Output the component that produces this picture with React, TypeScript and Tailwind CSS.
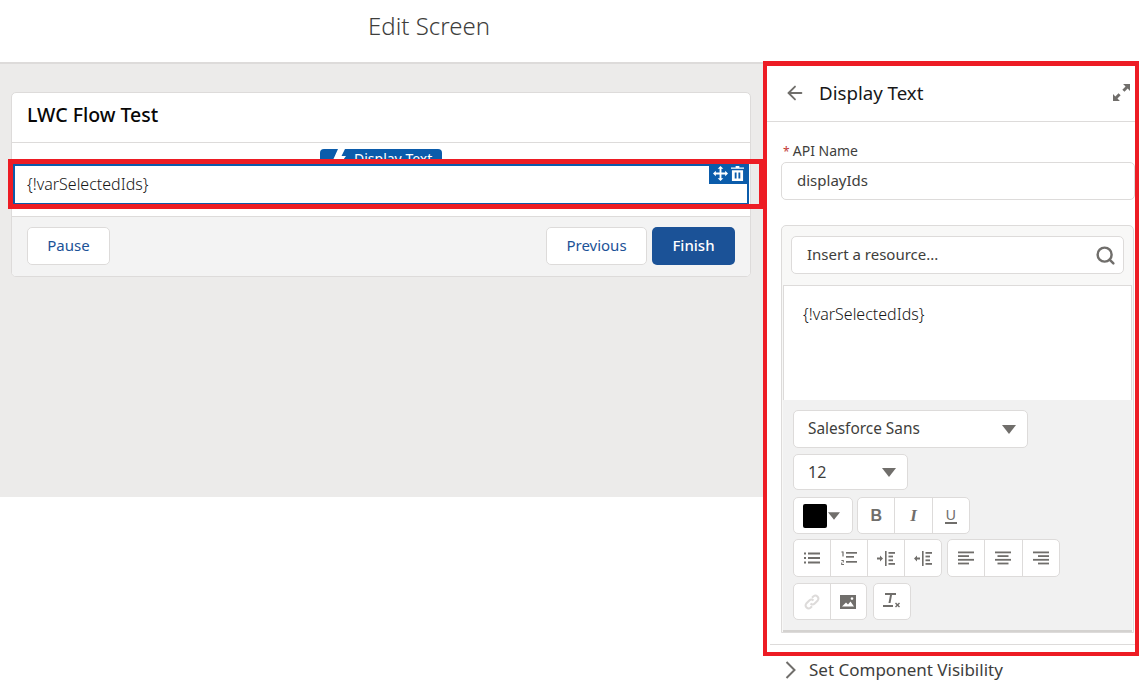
import { ArrowLeft, Search } from 'lucide-react';
import type { ReactNode } from 'react';

const ICON = '#706e6b';

function Caret({ className }: { className: string }) {
  return (
    <svg viewBox="0 0 14 9" className={className}>
      <path d="M0 0h14L7 9z" fill={ICON} />
    </svg>
  );
}

function Lines({ rows }: { rows: [number, number][] }) {
  return (
    <svg viewBox="0 0 16 14" className="w-[16px] h-[14px]">
      {rows.map(([x1, x2], i) => (
        <rect key={i} x={x1} y={i * 3.7 + 0.5} width={x2 - x1} height="1.8" fill={ICON} />
      ))}
    </svg>
  );
}

const full: [number, number] = [0, 16];

const Bullets = () => (
  <svg viewBox="0 0 16 12" className="w-[16px] h-[12px]" fill={ICON}>
    <rect x="0" y="0.5" width="2" height="2" /><rect x="4" y="0.5" width="12" height="2" />
    <rect x="0" y="5" width="2" height="2" /><rect x="4" y="5" width="12" height="2" />
    <rect x="0" y="9.5" width="2" height="2" /><rect x="4" y="9.5" width="12" height="2" />
  </svg>
);

const Numbered = () => (
  <svg viewBox="0 0 16 15" className="w-[16px] h-[15px]" fill={ICON}>
    <rect x="1.4" y="0.5" width="1.2" height="5" /><rect x="0.4" y="0.5" width="1.5" height="1" />
    <rect x="5" y="1" width="11" height="1.7" /><rect x="5" y="5" width="8" height="1.7" />
    <rect x="5" y="10" width="11" height="1.7" />
    <path d="M0.4 9h2.4v2.6H1.2v1.4h1.8v1H0.2v-2.6h1.6V10H.4z" />
  </svg>
);

const Indent = ({ flip }: { flip?: boolean }) => (
  <svg viewBox="0 0 18 15" className="w-[18px] h-[15px]" fill={ICON}>
    <path d={flip ? 'M0 7.5l3-3v2h3v2H3v2z' : 'M6 7.5l-3-3v2H0v2h3v2z'} />
    <rect x="8" y="0" width="1.6" height="15" />
    <rect x="11.5" y="1" width="6.5" height="1.8" /><rect x="11.5" y="4.6" width="4.5" height="1.8" />
    <rect x="11.5" y="8.4" width="4.5" height="1.8" /><rect x="11.5" y="12" width="6.5" height="1.8" />
  </svg>
);

function ToolButton({ children, first }: { children: ReactNode; first?: boolean }) {
  return (
    <div className={`flex-1 flex items-center justify-center ${first ? '' : 'border-l border-[#dddbda]'}`}>
      {children}
    </div>
  );
}

function ToolGroup({ width, children }: { width: string; children: ReactNode }) {
  return (
    <div className={`flex h-full bg-white border border-[#dddbda] rounded-[5px] ${width}`}>{children}</div>
  );
}

export default function App() {
  return (
    <div className="relative w-[1139px] h-[689px] overflow-hidden bg-white text-[#16325c] font-['Noto_Sans',sans-serif]">
      <header className="h-[64px] border-b-2 border-[#dddbda] bg-white">
        <div className="w-[858px] pt-[9px] text-center text-[24px] leading-[34px] font-light text-[#3e3e3c]">Edit Screen</div>
      </header>

      <div className="flex items-start">
        <main className="w-[764px] h-[433px] bg-[#ecebea] pl-[11px] pt-[28px]">
          <div className="w-[740px] h-[185px] bg-white border border-[#dddbda] rounded-[5px] flex flex-col overflow-hidden">
            <div className="h-[50px] border-b border-[#dddbda] px-[15px] pb-[6px] flex items-center text-[19.5px] font-medium text-[#080707]">LWC Flow Test</div>
            <div className="relative h-[74px] border-b border-[#dddbda] pt-[21px] pl-px pr-px">
              <div className="absolute left-[308px] top-[6px] w-[122px] h-[19px] bg-[#0b5cab] rounded-t-[4px] flex items-center text-white text-[14px]">
                <svg viewBox="0 0 14 22" className="absolute left-[12px] top-0 w-[14px] h-[22px]" fill="#fff">
                  <path d="M6 0h7L9.5 7H14L3 22l2.500-11H1z" />
                </svg>
                <span className="pl-[34px] leading-[19px]">Display Text</span>
              </div>
              <div className="relative h-[41px] w-[736px] bg-white border-2 border-[#0b5cab] flex items-center pl-[12px] pb-[1px] text-[16px] font-light text-[#181818]">
                {'{!varSelectedIds}'}
                <div className="absolute right-0 top-0 w-[38px] h-[18px] bg-[#0b5cab] flex items-start justify-center gap-[3px]">
                  <svg viewBox="0 0 16 16" className="w-[15px] h-[15px]" fill="#fff">
                    <path d="M8 0l3 3H9v4h4V5l3 3-3 3V9H9v4h2l-3 3-3-3h2V9H3v2L0 8l3-3v2h4V3H5z" />
                  </svg>
                  <svg viewBox="0 0 14 16" className="w-[13px] h-[15px]" fill="#fff">
                    <path d="M5 0h4v1.500h5V3H0V1.500h5zM1 4.500h12V16H1zM4 7v6.500h2V7zm4 0v6.500h2V7z" />
                  </svg>
                </div>
              </div>
            </div>
            <div className="flex-1 bg-[#f3f3f3] px-[15px] pt-[10px] flex justify-between">
              <button className="w-[83px] h-[38px] pb-[2px] bg-white border border-[#dddbda] rounded-[5px] text-[15px] text-[#1b5297]">Pause</button>
              <div className="flex gap-[5px]">
                <button className="w-[101px] h-[38px] pb-[2px] bg-white border border-[#dddbda] rounded-[5px] text-[15px] text-[#1b5297]">Previous</button>
                <button className="w-[83px] h-[38px] pb-[2px] bg-[#1b5297] rounded-[5px] text-[15px] font-medium text-white">Finish</button>
              </div>
            </div>
          </div>
        </main>

        <aside className="w-[375px] h-[625px] bg-white">
          <div className="h-[58px] border-b border-[#dddbda] flex items-center pl-[20px] pr-[9px]">
            <ArrowLeft className="w-[22px] h-[22px] text-[#706e6b]" strokeWidth={2} />
            <span className="ml-[13px] pt-[1px] text-[18.7px] text-[#181818] flex-1">Display Text</span>
            <svg viewBox="0 0 16 16" className="w-[17px] h-[17px]" fill={ICON}>
              <path d="M9.500 0H16v6.500l-2.200-2.200-3 3-2-2 3-3zM6.500 16H0V9.500l2.200 2.200 3-3 2 2-3 3z" />
            </svg>
          </div>
          <div className="pl-[17px] pr-[4px] pt-[20px]">
            <div className="pl-[2px] h-[18px] text-[14px] leading-[18px] text-[#3e3e3c]">
              <span className="text-[#c23934] text-[12px]">* </span>API Name
            </div>
            <div className="mt-[2px] h-[38px] bg-white border border-[#dddbda] rounded-[5px] flex items-center pl-[15px] pb-[2px] text-[15px] text-[#3e3e3c]">displayIds</div>

            <div className="mt-[25px] mr-px h-[408px] bg-[#f8f8f7] border border-[#dddbda] rounded-t-[5px] flex flex-col">
              <div className="px-[9px] pt-[10px] h-[59px]">
                <div className="h-[38px] bg-white border border-[#dddbda] rounded-[5px] flex items-center pl-[15px] pr-[7px] pb-[2px] text-[15px] text-[#3e3e3c]">
                  <span className="flex-1">Insert a resource...</span>
                  <Search className="w-[21px] h-[21px] mt-[2px] text-[#706e6b]" strokeWidth={2.8} />
                </div>
              </div>
              <div className="mx-px h-[115px] bg-white border-t border-x border-[#dddbda] pl-[19px] pt-[18px] text-[16px] font-light leading-[20px] text-[#181818]">
                {'{!varSelectedIds}'}
              </div>
              <div className="flex-1 mx-px bg-[#f1f1f1] border-b-[2px] border-[#d4d2d0] pl-[10px] pt-[10px] flex flex-col">
                <div className="w-[235px] h-[38px] bg-white border border-[#dddbda] rounded-[5px] flex items-center justify-between pl-[14px] pr-[11px] text-[15.4px] text-[#3e3e3c]">
                  Salesforce Sans
                  <Caret className="w-[14px] h-[9px]" />
                </div>
                <div className="mt-[6px] w-[115px] h-[36px] bg-white border border-[#dddbda] rounded-[5px] flex items-center justify-between pl-[14px] pr-[11px] text-[16px] text-[#3e3e3c]">
                  12
                  <Caret className="w-[14px] h-[9px]" />
                </div>
                <div className="mt-[7px] h-[37px] flex gap-[4px]">
                  <div className="w-[60px] h-full bg-white border border-[#dddbda] rounded-[5px] flex items-center pl-[9px] gap-[1px]">
                    <div className="w-[24px] h-[24px] bg-black rounded-[2px]" />
                    <Caret className="w-[12px] h-[8px]" />
                  </div>
                  <ToolGroup width="w-[113px]">
                    <ToolButton first><span className="font-['Liberation_Sans',sans-serif] font-bold text-[16px] text-[#706e6b]">B</span></ToolButton>
                    <ToolButton><span className="font-['Liberation_Serif',serif] font-bold italic text-[17px] text-[#706e6b]">I</span></ToolButton>
                    <ToolButton><span className="font-['Liberation_Sans',sans-serif] text-[14px] leading-[14px] text-[#706e6b] border-b-2 border-[#706e6b] px-px">U</span></ToolButton>
                  </ToolGroup>
                </div>
                <div className="mt-[5px] h-[38px] flex gap-[5px]">
                  <ToolGroup width="w-[149px]">
                    <ToolButton first><Bullets /></ToolButton>
                    <ToolButton><Numbered /></ToolButton>
                    <ToolButton><Indent /></ToolButton>
                    <ToolButton><Indent flip /></ToolButton>
                  </ToolGroup>
                  <ToolGroup width="w-[113px]">
                    <ToolButton first><Lines rows={[full, [0, 11], full, [0, 11]]} /></ToolButton>
                    <ToolButton><Lines rows={[full, [2.500, 13.500], full, [2.500, 13.500]]} /></ToolButton>
                    <ToolButton><Lines rows={[full, [5, 16], full, [5, 16]]} /></ToolButton>
                  </ToolGroup>
                </div>
                <div className="mt-[6px] h-[37px] flex gap-[6px]">
                  <ToolGroup width="w-[74px]">
                    <ToolButton first>
                      <svg viewBox="0 0 16 16" className="w-[16px] h-[16px]" fill="none" stroke="#dddbda" strokeWidth="2">
                        <path d="M6.500 9.500a3 3 0 0 0 4.200 0l3-3a3 3 0 0 0-4.200-4.200L8 3.800M9.500 6.500a3 3 0 0 0-4.200 0l-3 3a3 3 0 0 0 4.200 4.200L8 12.200" />
                      </svg>
                    </ToolButton>
                    <ToolButton>
                      <svg viewBox="0 0 16 14" className="w-[16px] h-[14px]">
                        <path fillRule="evenodd" d="M0 0h16v14H0zM2 11.500h12L10.500 6.500 8 9.500 6 7.500zM12 2.200a1.300 1.300 0 1 0 .01 0z" fill={ICON} />
                      </svg>
                    </ToolButton>
                  </ToolGroup>
                  <ToolGroup width="w-[38px]">
                    <ToolButton first>
                      <svg viewBox="0 0 18 17" className="w-[18px] h-[17px]" fill={ICON}>
                        <path d="M2 0h11v2H9L7.500 10H5.500L7 2H2z" />
                        <rect x="0" y="12" width="10" height="2" />
                        <path d="M12 10.500l1-1 1.500 1.500 1.500-1.500 1 1-1.500 1.500 1.500 1.500-1 1-1.500-1.500-1.500 1.500-1-1 1.500-1.500z" />
                      </svg>
                    </ToolButton>
                  </ToolGroup>
                </div>
              </div>
            </div>
          </div>
          <div className="mt-[11px] ml-[6px] border-t border-[#dddbda]" />
          <div className="mt-[13px] pl-[21px] flex items-center text-[17px] leading-[24px] text-[#3e3e3c]">
            <svg viewBox="0 0 11 18" className="w-[11px] h-[18px]" fill="none" stroke={ICON} strokeWidth="2">
              <path d="M1.500 1l8 8-8 8" />
            </svg>
            <span className="ml-[13px]">Set Component Visibility</span>
          </div>
        </aside>
      </div>

      <div className="absolute left-[8px] top-[159px] w-[756px] h-[50px] border-[5px] border-[#ed1c24] pointer-events-none" />
      <div className="absolute left-[763px] top-[61px] w-[376px] h-[595px] border-[4px] border-t-[5px] border-[#ed1c24] pointer-events-none" />
    </div>
  );
}
